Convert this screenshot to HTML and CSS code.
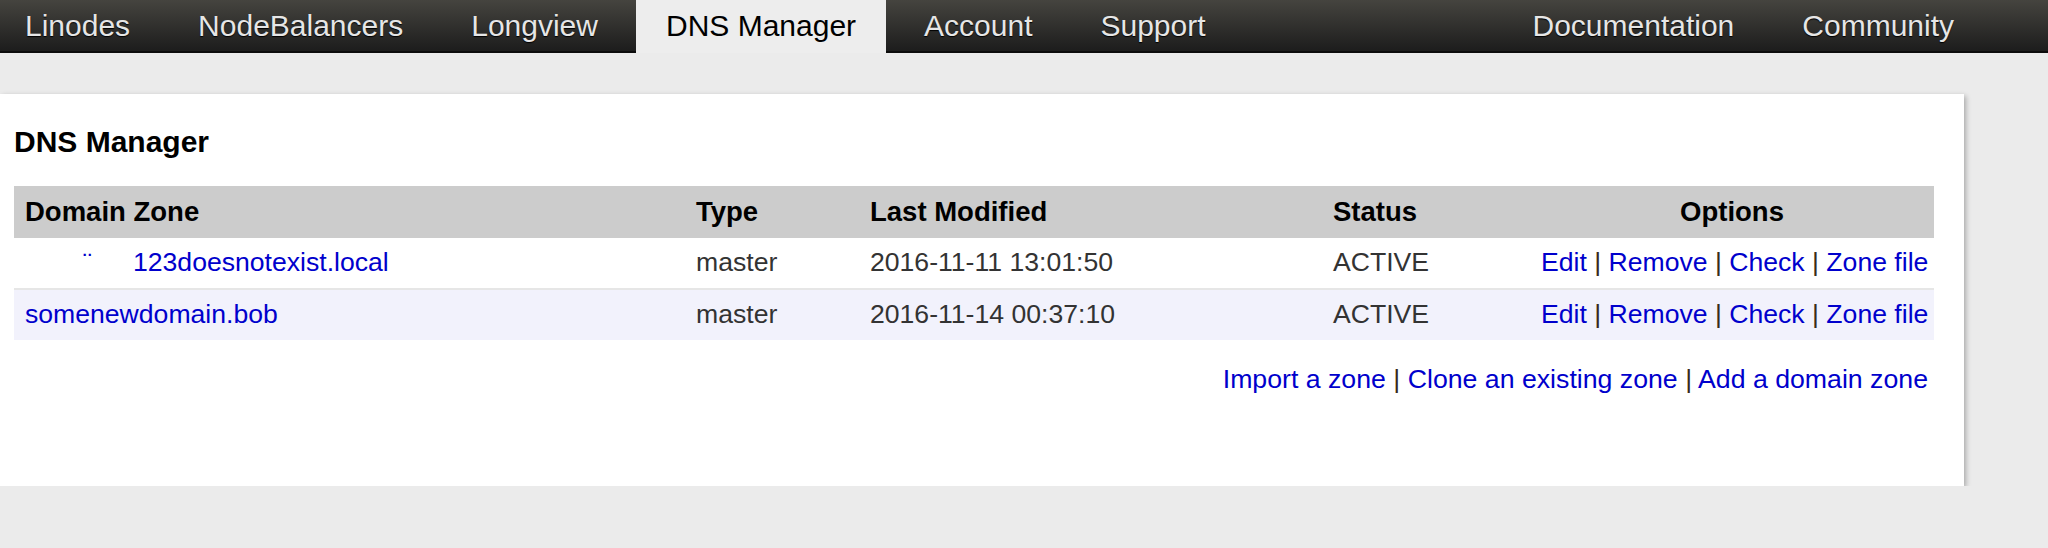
FILE: index.html
```html
<!DOCTYPE html>
<html lang="en">
<head>
<meta charset="utf-8">
<title>DNS Manager</title>
<link rel="stylesheet" href="styles.css">
</head>
<body>
<nav class="topnav">
  <ul class="tabs tabs-left">
    <li class="tab"><a href="#">Linodes</a></li>
    <li class="tab"><a href="#">NodeBalancers</a></li>
    <li class="tab"><a href="#">Longview</a></li>
    <li class="tab tab-active"><a href="#">DNS Manager</a></li>
    <li class="tab"><a href="#">Account</a></li>
    <li class="tab"><a href="#">Support</a></li>
  </ul>
  <ul class="tabs tabs-right">
    <li class="tab"><a href="#">Documentation</a></li>
    <li class="tab"><a href="#">Community</a></li>
  </ul>
</nav>
<main class="content">
  <section class="panel">
    <h1 class="panel-title">DNS Manager</h1>
    <table class="zones">
      <colgroup>
        <col class="col-domain">
        <col class="col-type">
        <col class="col-modified">
        <col class="col-status">
        <col class="col-options">
      </colgroup>
      <thead>
        <tr>
          <th>Domain Zone</th>
          <th>Type</th>
          <th>Last Modified</th>
          <th>Status</th>
          <th class="th-options">Options</th>
        </tr>
      </thead>
      <tbody>
        <tr class="row row-odd">
          <td><a href="#"><span class="redact">¨</span>123doesnotexist.local</a></td>
          <td>master</td>
          <td>2016-11-11 13:01:50</td>
          <td>ACTIVE</td>
          <td class="td-options"><a href="#">Edit</a> <span class="sep">|</span> <a href="#">Remove</a> <span class="sep">|</span> <a href="#">Check</a> <span class="sep">|</span> <a href="#">Zone file</a></td>
        </tr>
        <tr class="row row-even">
          <td><a href="#">somenewdomain.bob</a></td>
          <td>master</td>
          <td>2016-11-14 00:37:10</td>
          <td>ACTIVE</td>
          <td class="td-options"><a href="#">Edit</a> <span class="sep">|</span> <a href="#">Remove</a> <span class="sep">|</span> <a href="#">Check</a> <span class="sep">|</span> <a href="#">Zone file</a></td>
        </tr>
      </tbody>
    </table>
    <div class="actions">
      <a href="#">Import a zone</a> <span class="sep">|</span> <a href="#">Clone an existing zone</a> <span class="sep">|</span> <a href="#">Add a domain zone</a>
    </div>
  </section>
</main>
</body>
</html>
```
FILE: styles.css
```css
html, body {
  margin: 0;
  padding: 0;
}

body {
  background: #ebebeb;
  font-family: "Liberation Sans", Arial, Helvetica, sans-serif;
  color: #333;
}

a {
  text-decoration: none;
}

/* ---------- top navigation ---------- */
.topnav {
  display: flex;
  justify-content: space-between;
  height: 53px;
  background: linear-gradient(#45443f, #1b1b1b);
  box-shadow: inset 0 -2px 0 #0c0c0c;
}

.tabs {
  display: flex;
  gap: 8px;
  list-style: none;
  margin: 0;
  padding: 0;
}

.tabs-right {
  padding-right: 64px;
}

.tab a {
  display: block;
  height: 53px;
  line-height: 51px;
  padding: 0 30px;
  font-size: 30px;
  color: #e6e6e6;
  text-shadow: 0 1px 1px #000;
  white-space: nowrap;
}

.tabs-left .tab:first-child a {
  padding-left: 25px;
}

.tab-active a {
  background: #ededed;
  color: #000;
  text-shadow: none;
}

/* ---------- content ---------- */
.content {
  padding-top: 41px;
}

.panel {
  width: 1964px;
  box-sizing: border-box;
  background: #fff;
  padding: 30px 30px 89px 14px;
  box-shadow: 2px 2px 5px rgba(0, 0, 0, 0.28);
}

.panel-title {
  margin: 0 0 26px;
  font-size: 30px;
  line-height: 36px;
  font-weight: bold;
  color: #000;
}

.zones {
  width: 1920px;
  table-layout: fixed;
  border-collapse: collapse;
}

.col-domain { width: 671px; }
.col-type { width: 174px; }
.col-modified { width: 463px; }
.col-status { width: 208px; }
.col-options { width: 404px; }

.zones th {
  background: #cccccc;
  color: #000;
  font-size: 27.5px;
  font-weight: bold;
  text-align: left;
  line-height: 52px;
  padding: 0 11px;
  white-space: nowrap;
}

.zones th.th-options {
  text-align: center;
}

.zones td {
  font-size: 26.6px;
  line-height: 48px;
  padding: 0 11px 2px;
  color: #333;
  white-space: nowrap;
}

.zones td a,
.actions a {
  color: #0000cc;
}

.row-odd td {
  background: #fff;
  border-bottom: 2px solid #e6e6e6;
}

.row-even td {
  background: #f2f2fc;
}

.zones td.td-options {
  text-align: right;
  padding-right: 6px;
}

.sep {
  color: #3a2a1a;
}

.redact {
  display: inline-block;
  width: 50px;
  padding-left: 58px;
}

.actions {
  width: 1920px;
  box-sizing: border-box;
  margin-top: 21px;
  padding-right: 6px;
  text-align: right;
  font-size: 26.7px;
  line-height: 36px;
  white-space: nowrap;
}
```
